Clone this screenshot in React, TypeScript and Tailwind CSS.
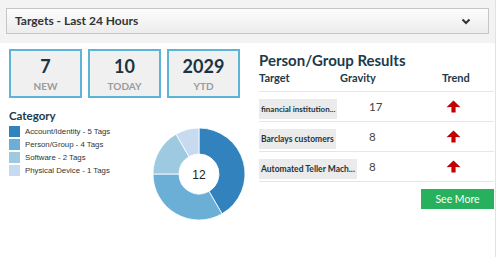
import React from "react";

const slices = [
  { label: "Account/Identity - 5 Tags", value: 5, color: "#3182bd" },
  { label: "Person/Group - 4 Tags", value: 4, color: "#6baed6" },
  { label: "Software - 2 Tags", value: 2, color: "#9ecae1" },
  { label: "Physical Device - 1 Tags", value: 1, color: "#c6dbef" },
];

const rows = [
  { target: "financial institution...", gravity: 17, small: true },
  { target: "Barclays customers", gravity: 8 },
  { target: "Automated Teller Mach...", gravity: 8 },
];

const arcPath = (cx: number, cy: number, R: number, r: number, a0: number, a1: number) => {
  const pt = (rad: number, a: number) => [cx + rad * Math.sin(a), cy - rad * Math.cos(a)];
  const [x0, y0] = pt(R, a0);
  const [x1, y1] = pt(R, a1);
  const [x2, y2] = pt(r, a1);
  const [x3, y3] = pt(r, a0);
  const large = a1 - a0 > Math.PI ? 1 : 0;
  return `M${x0} ${y0} A${R} ${R} 0 ${large} 1 ${x1} ${y1} L${x2} ${y2} A${r} ${r} 0 ${large} 0 ${x3} ${y3} Z`;
};

const Donut = () => {
  const total = slices.reduce((s, x) => s + x.value, 0);
  let acc = 0;
  return (
    <svg width="94" height="94" viewBox="0 0 94 94">
      {slices.map((s) => {
        const a0 = (acc / total) * Math.PI * 2;
        acc += s.value;
        const a1 = (acc / total) * Math.PI * 2;
        return <path key={s.label} d={arcPath(47, 47, 46, 20, a0, a1)} fill={s.color} stroke="#ffffff" strokeWidth="0.8" />;
      })}
      <text x="47" y="51.5" textAnchor="middle" fontSize="12" fill="#222" fontFamily="'Liberation Sans', Arial, sans-serif">
        {total}
      </text>
    </svg>
  );
};

const UpArrow = () => (
  <svg width="15" height="13" viewBox="0 0 15 13">
    <path d="M7.5 0.5 L14.5 7.2 Q12 6.8 9.6 6.9 L9.6 12.5 L5.4 12.5 L5.4 6.9 Q3 6.8 0.5 7.2 Z" fill="#c40000" />
  </svg>
);

const StatBox = ({ value, label }: { value: string; label: string }) => (
  <div className="w-[73px] h-[49px] border-2 border-[#5db3d8] bg-[#f0f0f0] flex flex-col items-center">
    <span className="mt-[5px] text-[18px] leading-[20px] font-bold text-[#1b3340]">{value}</span>
    <span className="mt-[4px] text-[10px] leading-[12px] font-bold text-[#9a9a9a]">{label}</span>
  </div>
);

export default function App() {
  return (
    <div className="w-[500px] h-[257px] bg-white overflow-hidden" style={{ fontFamily: "Lato, 'Open Sans', sans-serif" }}>
      <div className="w-[496px] h-full border-r border-[#e2e2e2]">
        <div className="bg-[#f3f3f3] px-[6px] pt-[8px] pb-[9px]">
          <div className="h-[26px] border border-[#c6c6c6] bg-gradient-to-b from-[#fdfdfd] to-[#ececec] flex items-center justify-between pl-[8px] pr-[17px]">
            <span className="text-[12px] font-bold text-[#333]">Targets - Last 24 Hours</span>
            <svg width="10" height="7" viewBox="0 0 10 7">
              <polyline points="1.5,1.5 5,5 8.5,1.5" fill="none" stroke="#333" strokeWidth="2" />
            </svg>
          </div>
        </div>

        <div className="flex">
          <div className="w-[250px] pl-[9px] pt-[6px]">
            <div className="flex gap-[6px]">
              <StatBox value="7" label="NEW" />
              <StatBox value="10" label="TODAY" />
              <StatBox value="2029" label="YTD" />
            </div>
            <div className="flex">
              <div className="w-[143px]">
                <div className="mt-[11px] text-[11.5px] leading-[14px] font-bold text-[#1b3b4b]">Category</div>
                <div className="mt-[3px] flex flex-col gap-[2px]">
                  {slices.map((s) => (
                    <div key={s.label} className="flex items-center gap-[5px] h-[11px]">
                      <span className="w-[11px] h-[11px]" style={{ backgroundColor: s.color }} />
                      <span className="text-[7.8px] text-[#333]" style={{ fontFamily: "'Liberation Sans', Arial, sans-serif" }}>
                        {s.label}
                      </span>
                    </div>
                  ))}
                </div>
              </div>
              <div className="mt-[29px]">
                <Donut />
              </div>
            </div>
          </div>

          <div className="w-[235px] ml-[9px] pt-[7px]">
            <div className="text-[15px] leading-[20px] font-bold text-[#1b3b4b]">Person/Group Results</div>
            <div className="flex text-[11px] leading-[16px] font-bold text-[#1b3b4b] border-b border-[#e6e6e6] pb-[5px]">
              <span className="w-[81px]">Target</span>
              <span className="w-[102px]">Gravity</span>
              <span>Trend</span>
            </div>
            {rows.map((r) => (
              <div key={r.target} className="flex items-center h-[30px] border-b border-[#e6e6e6]">
                <div className="w-[110px]">
                  <span className={`inline-block bg-[#ebebeb] px-[2px] leading-[20px] font-bold text-[#24343c] ${r.small ? "text-[8px]" : "text-[8.5px]"}`}>
                    {r.target}
                  </span>
                </div>
                <span className="w-[77px] text-[11.5px] text-[#444]">{r.gravity}</span>
                <UpArrow />
              </div>
            ))}
            <div className="flex justify-end mt-[7px]">
              <button className="w-[73px] h-[20px] bg-[#27b15c] text-white text-[10.5px] leading-[20px]">See More</button>
            </div>
          </div>
        </div>
      </div>
    </div>
  );
}
